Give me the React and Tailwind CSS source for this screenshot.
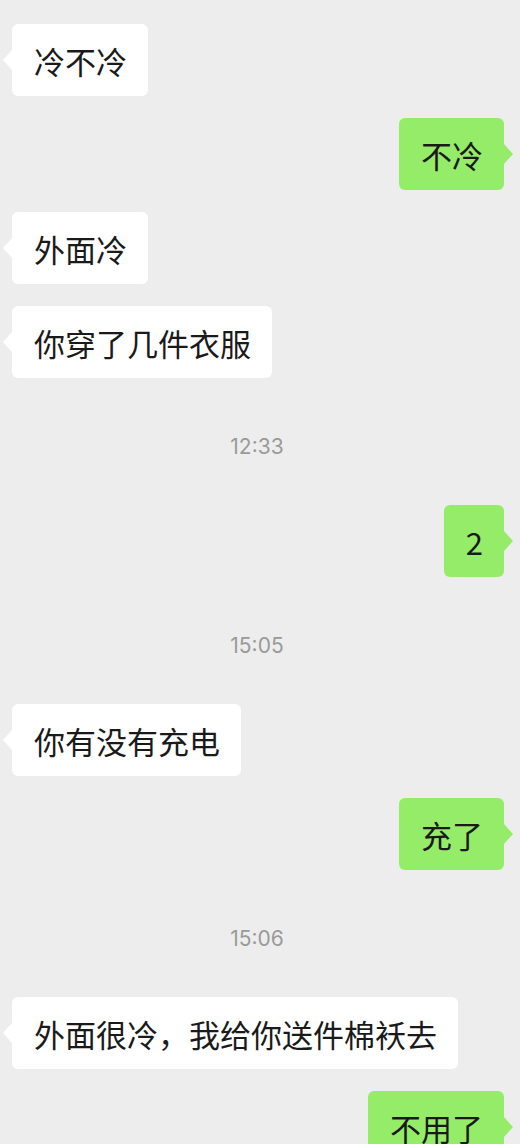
import React from "react";

const messages = [
  { type: "in", text: "冷不冷" },
  { type: "out", text: "不冷" },
  { type: "in", text: "外面冷" },
  { type: "in", text: "你穿了几件衣服" },
  { type: "time", text: "12:33" },
  { type: "out", text: "2" },
  { type: "time", text: "15:05" },
  { type: "in", text: "你有没有充电" },
  { type: "out", text: "充了" },
  { type: "time", text: "15:06" },
  { type: "in", text: "外面很冷，我给你送件棉袄去" },
  { type: "out", text: "不用了" },
];

function Bubble({ text, out }) {
  return (
    <div className={out ? "flex justify-end pr-[16px]" : "flex justify-start pl-[12px]"}>
      <div
        className={
          "relative h-[72px] flex items-center rounded-[6px] pl-[22px] pr-[21px] text-[31px] leading-none text-[#1a1a1a] " +
          (out ? "bg-[#95ec69]" : "bg-white")
        }
      >
        {out ? (
          <span className="absolute right-[-9px] top-1/2 -translate-y-1/2 w-0 h-0 border-y-[10px] border-y-transparent border-l-[9px] border-l-[#95ec69]" />
        ) : (
          <span className="absolute left-[-9px] top-1/2 -translate-y-1/2 w-0 h-0 border-y-[10px] border-y-transparent border-r-[9px] border-r-white" />
        )}
        <span>{text}</span>
      </div>
    </div>
  );
}

export default function App() {
  return (
    <div
      className="w-[520px] h-[1144px] overflow-hidden bg-[#ededed] pt-[2px]"
      style={{ fontFamily: '"Noto Sans CJK SC", "Noto Sans", sans-serif' }}
    >
      {messages.map((m, i) =>
        m.type === "time" ? (
          <div
            key={i}
            className="mt-[54px] mb-[43px] h-[30px] flex items-center justify-center pr-[6px] text-[21px] text-[#9a9a9a]"
            style={{ fontFamily: 'Inter, "Noto Sans", sans-serif' }}
          >
            {m.text}
          </div>
        ) : (
          <div key={i} className={messages[i - 1]?.type === "time" ? "" : "mt-[22px]"}>
            <Bubble text={m.text} out={m.type === "out"} />
          </div>
        )
      )}
    </div>
  );
}
